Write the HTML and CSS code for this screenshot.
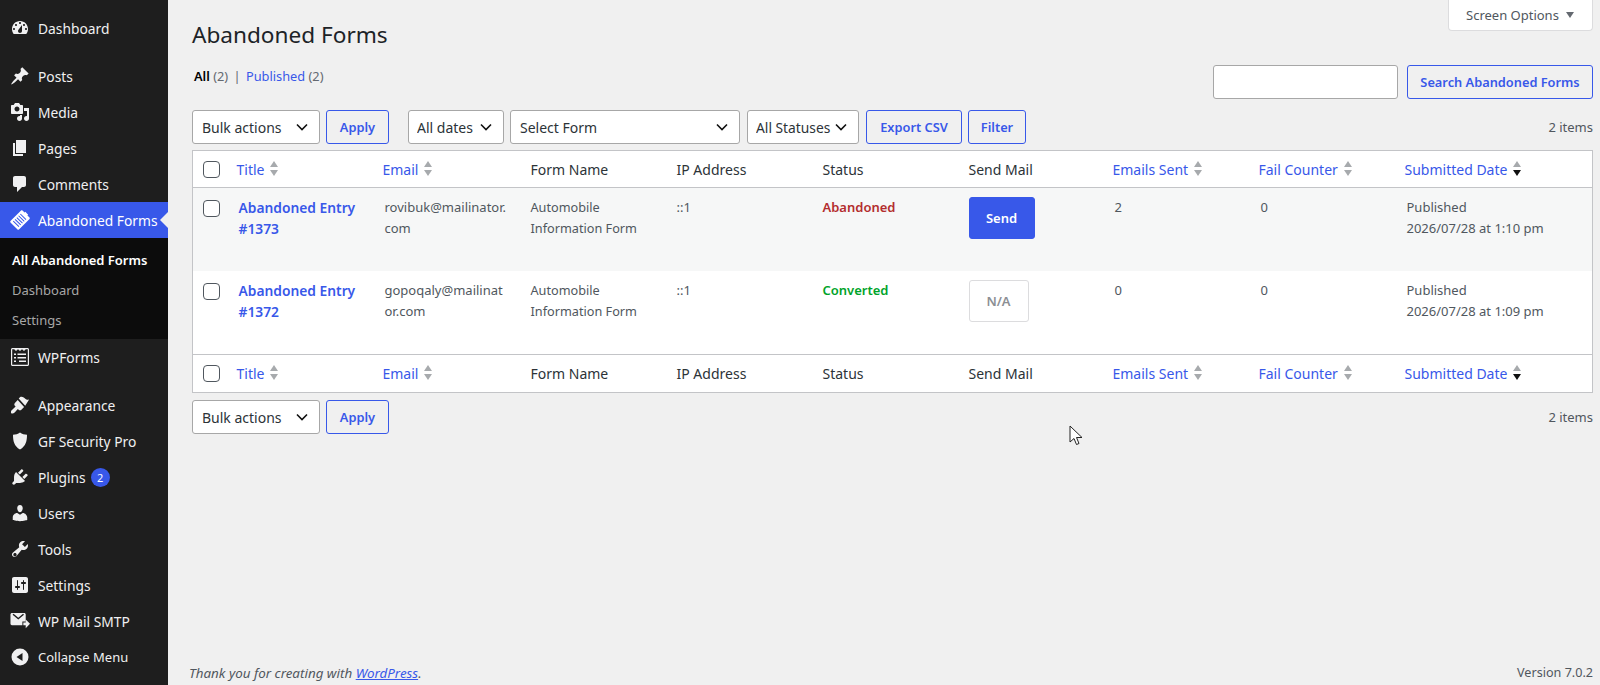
FILE: index.html
```html
<!DOCTYPE html>
<html lang="en">
<head>
    <meta charset="UTF-8">
    <title>Abandoned Forms</title>
    <link rel="stylesheet" href="styles.css">
</head>
<body>
    <div class="admin-menu">
        <ul class="menu">
            <li class="menu-item"><svg viewBox="0 0 20 20"><path d="M3.76 16h12.48c1.1-1.37 1.76-3.11 1.76-5 0-4.42-3.58-8-8-8s-8 3.58-8 8c0 1.89.66 3.63 1.76 5zM10 4c.55 0 1 .45 1 1s-.45 1-1 1-1-.45-1-1 .45-1 1-1zM6 6c.55 0 1 .45 1 1s-.45 1-1 1-1-.45-1-1 .45-1 1-1zm8 0c.55 0 1 .45 1 1s-.45 1-1 1-1-.45-1-1 .45-1 1-1zm-5.37 5.55L12 7v6c0 1.1-.9 2-2 2s-2-.9-2-2c0-.57.24-1.08.63-1.45zM4 10c.55 0 1 .45 1 1s-.45 1-1 1-1-.45-1-1 .45-1 1-1zm12 0c.55 0 1 .45 1 1s-.45 1-1 1-1-.45-1-1 .45-1 1-1z" fill-rule="evenodd"/></svg>Dashboard</li>
        </ul>
        <ul class="menu">
            <li class="menu-item"><svg viewBox="0 0 20 20"><path d="M10.44 3.02l1.82-1.82 6.36 6.35-1.83 1.82c-1.05-.68-2.48-.57-3.41.36l-.75.75c-.92.93-1.04 2.35-.35 3.41l-1.83 1.82-2.41-2.41-2.8 2.79c-.42.42-3.38 2.71-3.8 2.29s1.86-3.39 2.28-3.81l2.79-2.79L4.1 9.36l1.83-1.82c1.05.69 2.48.57 3.4-.36l.75-.75c.93-.92 1.05-2.35.36-3.41z"/></svg>Posts</li>
            <li class="menu-item"><svg viewBox="0 0 20 20"><path d="M13 11V4c0-.55-.45-1-1-1h-1.67L9 1H5L3.67 3H2c-.55 0-1 .45-1 1v7c0 .55.45 1 1 1h10c.55 0 1-.45 1-1zM7 4.5c1.38 0 2.5 1.12 2.5 2.5S8.38 9.5 7 9.5 4.500 8.38 4.500 7 5.620 4.500 7 4.500zM14 6h5v10.500c0 1.38-1.120 2.500-2.500 2.500S14 17.880 14 16.500s1.120-2.500 2.500-2.500c.17 0 .34.02.5.05V9h-3V6zm-4 8.050V13h2v3.500c0 1.38-1.120 2.500-2.500 2.500S7 17.880 7 16.500 8.120 14 9.500 14c.17 0 .34.02.5.05z" fill-rule="evenodd"/></svg>Media</li>
            <li class="menu-item"><svg viewBox="0 0 20 20"><path d="M6 15V2h10v13H6zm-1 1h8v2H3V5h2v11z"/></svg>Pages</li>
            <li class="menu-item"><svg viewBox="0 0 20 20"><path d="M5 2h9c1.100 0 2 .9 2 2v7c0 1.100-.9 2-2 2h-2l-5 5v-5H5c-1.100 0-2-.9-2-2V4c0-1.100.9-2 2-2z"/></svg>Comments</li>
            <li class="menu-item current"><svg viewBox="0 0 20 20"><path transform="rotate(45 10 10)" d="M5 1.500h3V.5h4v1h3c.5 0 1 .5 1 1v15c0 .5-.5 1-1 1H5c-.5 0-1-.5-1-1v-15c0-.5.5-1 1-1zM6 5v1h8V5H6zm0 2.500v1h8v-1H6zM6 10v1h8v-1H6zm0 2.500v1h8v-1H6zM6 15v1h8v-1H6z" fill-rule="evenodd"/></svg>Abandoned Forms</li>
        </ul>
        <ul class="submenu">
            <li class="sub-item active">All Abandoned Forms</li>
            <li class="sub-item">Dashboard</li>
            <li class="sub-item">Settings</li>
        </ul>
        <ul class="menu">
            <li class="menu-item"><svg viewBox="0 0 20 20"><path d="M2.500 1h15c.8 0 1.500.7 1.500 1.500v15c0 .8-.7 1.500-1.500 1.500h-15c-.8 0-1.500-.7-1.500-1.500v-15C1 1.700 1.700 1 2.500 1zm0 1.200c-.2 0-.3.100-.3.300v15c0 .2.100.3.3.3h15c.2 0 .3-.1.300-.3v-15c0-.2-.1-.3-.3-.3h-1.700L14 4l-2-1.800L10 4 8 2.200 6 4 4.200 2.200H2.500zM4 6.500h2v1.500H4V6.500zm3.500 0H16V8H7.500V6.500zM4 10h2v1.500H4V10zm3.500 0H16v1.500H7.500V10zM4 13.500h2V15H4v-1.500zm5 0h7V15H9v-1.500z" fill-rule="evenodd"/></svg>WPForms</li>
        </ul>
        <ul class="menu">
            <li class="menu-item"><svg viewBox="0 0 20 20"><path d="M8.700 3.600l1.500-1.500c.5-.5 2.300-.5 3.500.3 1.200.8 1.400 1.300 2.700 2 1.200.7 2.700.1 2.700.1l-3.900 6.200-6.500-7.100zM7.700 5l6.400 7-2.700 2.700c-.8.8-2 .8-2.800 0l-.7-.7c-.4.400-3.300 3.700-3.800 4.100-.9.800-2.800.5-3-.1-.4-1 .1-2.200.8-2.900.4-.4 3.300-3.200 3.700-3.600l-.7-.7c-.8-.8-.8-2 0-2.800L7.700 5z"/></svg>Appearance</li>
            <li class="menu-item"><svg viewBox="0 0 20 20"><path d="M10 1.500c2 1.500 4.500 2.200 7 2.200 0 6-1 11.300-7 14.800C4 15 3 9.700 3 3.700c2.500 0 5-.7 7-2.200z"/></svg>GF Security Pro</li>
            <li class="menu-item"><svg viewBox="0 0 20 20"><path d="M13.110 4.360L9.870 7.600 8 5.730l3.240-3.240c.35-.34 1.050-.2 1.560.32.52.51.66 1.210.31 1.550zm-8 1.770l.91-1.120 9.010 9.010-1.190.84c-.71.71-2.630 1.160-3.820 1.160H6.140L4.900 17.260c-.59.59-1.540.59-2.120 0-.59-.58-.59-1.530 0-2.120l1.240-1.240v-3.880c0-1.130.4-3.190 1.090-3.890zm7.260 3.970l3.240-3.240c.34-.35 1.040-.21 1.550.31.52.51.66 1.210.31 1.550l-3.240 3.250z"/></svg>Plugins<span class="count-badge">2</span></li>
            <li class="menu-item"><svg viewBox="0 0 20 20"><path d="M10 9.250c-2.270 0-2.730-3.440-2.730-3.440C7 4.020 7.820 2 9.970 2c2.160 0 2.980 2.020 2.710 3.810 0 0-.41 3.440-2.680 3.440zm0 2.570L12.720 10c2.390 0 4.520 2.330 4.520 4.530v2.490s-3.650 1.130-7.240 1.130c-3.650 0-7.240-1.130-7.240-1.130v-2.490c0-2.250 1.940-4.480 4.470-4.480z"/></svg>Users</li>
            <li class="menu-item"><svg viewBox="0 0 20 20"><path d="M16.680 9.770c-1.340 1.340-3.300 1.670-4.950.99l-5.410 6.520c-.99.99-2.590.99-3.580 0s-.99-2.590 0-3.570l6.520-5.420c-.68-1.650-.35-3.610.99-4.950 1.280-1.280 3.120-1.620 4.720-1.060l-2.890 2.890 2.820 2.820 2.860-2.870c.53 1.580.18 3.410-1.080 4.670zM3.810 16.910c.65.65 1.700.65 2.350 0 .65-.65.65-1.700 0-2.350-.65-.65-1.700-.65-2.350 0-.65.65-.65 1.700 0 2.350z" fill-rule="evenodd"/></svg>Tools</li>
            <li class="menu-item"><svg viewBox="0 0 20 20"><path d="M18 16V4c0-1.100-.9-2-2-2H4c-1.100 0-2 .9-2 2v12c0 1.100.9 2 2 2h12c1.100 0 2-.9 2-2zM8 11h1c.55 0 1 .45 1 1s-.45 1-1 1H8v1.500c0 .28-.22.5-.5.5s-.5-.22-.5-.5V13H6c-.55 0-1-.45-1-1s.45-1 1-1h1V5.500c0-.28.22-.5.5-.5s.5.22.5.5V11zm5-2h-1c-.55 0-1-.45-1-1s.45-1 1-1h1V5.500c0-.28.22-.5.5-.5s.5.22.5.5V7h1c.55 0 1 .45 1 1s-.45 1-1 1h-1v5.500c0 .28-.22.5-.5.5s-.5-.22-.5-.5V9z" fill-rule="evenodd"/></svg>Settings</li>
            <li class="menu-item"><svg viewBox="0 0 21 21"><path d="M2 2h13c.8 0 1.500.7 1.500 1.500V11h-3.500v4H2c-.8 0-1.500-.7-1.500-1.500v-10C.5 2.700 1.200 2 2 2zm.7 2l6 5 6-5-1-1.100-5 4.100-5-4.100-1 1.100z" fill-rule="evenodd"/><path d="M14 12h2.500V9l4.500 4.500-4.500 4.500v-3H14v-3z"/></svg>WP Mail SMTP</li>
            <li class="menu-item collapse"><svg viewBox="0 0 20 20"><path d="M10 1.500a8.500 8.500 0 1 1 0 17 8.500 8.500 0 0 1 0-17zM12.500 6L6.500 10l6 4V6z" fill-rule="evenodd"/></svg>Collapse Menu</li>
        </ul>
    </div>

    <div class="content">
        <div class="screen-options">Screen Options <span class="tab-arrow"></span></div>
        <h1 class="page-title">Abandoned Forms</h1>

        <div class="top-row">
            <div class="subsubsub"><strong>All</strong> <span class="num">(2)</span> <span class="sep">|</span> <a href="#">Published</a> <span class="num">(2)</span></div>
            <div class="search-box">
                <input class="search-input" type="text">
                <button class="btn">Search Abandoned Forms</button>
            </div>
        </div>

        <div class="tablenav tablenav-top">
            <select class="sel sel-bulk"><option>Bulk actions</option></select>
            <button class="btn btn-apply">Apply</button>
            <select class="sel sel-dates"><option>All dates</option></select>
            <select class="sel sel-form"><option>Select Form</option></select>
            <select class="sel sel-status"><option>All Statuses</option></select>
            <button class="btn btn-export">Export CSV</button>
            <button class="btn btn-filter">Filter</button>
            <span class="items">2 items</span>
        </div>

        <table class="entries">
            <colgroup>
                <col class="col-cb">
                <col class="col-std"><col class="col-std"><col class="col-std"><col class="col-std">
                <col class="col-std"><col class="col-std"><col class="col-std"><col class="col-std">
                <col>
            </colgroup>
            <thead>
                <tr>
                    <th class="cb"><input type="checkbox"></th>
                    <th class="sortable"><a href="#">Title<span class="sort"></span></a></th>
                    <th class="sortable"><a href="#">Email<span class="sort"></span></a></th>
                    <th>Form Name</th>
                    <th>IP Address</th>
                    <th>Status</th>
                    <th>Send Mail</th>
                    <th class="sortable"><a href="#">Emails Sent<span class="sort"></span></a></th>
                    <th class="sortable"><a href="#">Fail Counter<span class="sort"></span></a></th>
                    <th class="sortable"><a href="#">Submitted Date<span class="sort desc"></span></a></th>
                </tr>
            </thead>
            <tbody>
                <tr class="alt">
                    <td class="cb"><input type="checkbox"></td>
                    <td><a class="entry-link" href="#">Abandoned Entry #1373</a></td>
                    <td class="email">rovibuk@mailinator.com</td>
                    <td class="form-name">Automobile Information Form</td>
                    <td>::1</td>
                    <td><span class="status abandoned">Abandoned</span></td>
                    <td><button class="send">Send</button></td>
                    <td>2</td>
                    <td>0</td>
                    <td>Published<br>2026/07/28 at 1:10 pm</td>
                </tr>
                <tr>
                    <td class="cb"><input type="checkbox"></td>
                    <td><a class="entry-link" href="#">Abandoned Entry #1372</a></td>
                    <td class="email">gopoqaly@mailinator.com</td>
                    <td class="form-name">Automobile Information Form</td>
                    <td>::1</td>
                    <td><span class="status converted">Converted</span></td>
                    <td><span class="na">N/A</span></td>
                    <td>0</td>
                    <td>0</td>
                    <td>Published<br>2026/07/28 at 1:09 pm</td>
                </tr>
            </tbody>
            <tfoot>
                <tr>
                    <th class="cb"><input type="checkbox"></th>
                    <th class="sortable"><a href="#">Title<span class="sort"></span></a></th>
                    <th class="sortable"><a href="#">Email<span class="sort"></span></a></th>
                    <th>Form Name</th>
                    <th>IP Address</th>
                    <th>Status</th>
                    <th>Send Mail</th>
                    <th class="sortable"><a href="#">Emails Sent<span class="sort"></span></a></th>
                    <th class="sortable"><a href="#">Fail Counter<span class="sort"></span></a></th>
                    <th class="sortable"><a href="#">Submitted Date<span class="sort desc"></span></a></th>
                </tr>
            </tfoot>
        </table>

        <div class="tablenav tablenav-bottom">
            <select class="sel sel-bulk"><option>Bulk actions</option></select>
            <button class="btn btn-apply">Apply</button>
            <span class="items">2 items</span>
        </div>

        <div class="footer">
            <em>Thank you for creating with <a href="#">WordPress</a>.</em>
            <span class="version">Version 7.0.2</span>
        </div>

        <svg class="mouse-cursor" viewBox="0 0 14 22"><path d="M1 1v16l4-3.500 2.500 6 2.500-1-2.500-6H13z" fill="#fff" stroke="#222" stroke-width="1"/></svg>
    </div>
</body>
</html>
```

FILE: styles.css
```css
* {
    box-sizing: border-box;
}
html, body {
    height: 685px;
    overflow: hidden;
}
body {
    margin: 0;
    display: flex;
    font-family: "Noto Sans", sans-serif;
    font-size: 13px;
    color: #3c434a;
    background-color: #f0f0f0;
}
a {
    color: #3858e9;
    text-decoration: none;
}

/* sidebar */
.admin-menu {
    width: 168px;
    flex-shrink: 0;
    padding-top: 10px;
    background-color: #1e1e1e;
    color: #f0f0f1;
}
.menu, .submenu {
    list-style: none;
    margin: 0 0 12px;
    padding: 0;
}
.menu-item {
    position: relative;
    display: flex;
    align-items: center;
    height: 36px;
    padding-left: 10px;
    font-size: 13.800px;
    white-space: nowrap;
}
.menu-item svg {
    width: 20px;
    height: 20px;
    margin-right: 8px;
    fill: #f0f0f1;
    flex-shrink: 0;
}
.menu-item.current {
    background-color: #3858e9;
    color: #fff;
}
.menu-item.current svg {
    fill: #fff;
}
.menu-item.current::after {
    content: "";
    position: absolute;
    right: 0;
    top: 10px;
    border: 8px solid transparent;
    border-right-color: #f0f0f0;
    border-left-width: 0;
}
.menu:has(.current) {
    margin-bottom: 0;
}
.submenu {
    margin: 0;
    padding: 7px 0 5px;
    background-color: #0c0c0c;
    height: 101px;
}
.sub-item {
    height: 30px;
    line-height: 30px;
    padding-left: 12px;
    font-size: 13px;
    color: #a7a7a7;
}
.sub-item.active {
    color: #fff;
    font-weight: 600;
}
.count-badge {
    width: 19px;
    height: 19px;
    margin-left: 5px;
    border-radius: 50%;
    background-color: #3858e9;
    color: #fff;
    font-size: 11px;
    line-height: 19px;
    text-align: center;
}
.collapse {
    font-size: 13px;
}

/* main area */
.content {
    position: relative;
    flex: 1;
    display: flex;
    flex-direction: column;
    min-width: 0;
    padding: 0 7px 0 24px;
}
.screen-options {
    position: absolute;
    top: 0;
    right: 7px;
    width: 145px;
    height: 31px;
    padding-left: 17px;
    line-height: 30px;
    background-color: #fff;
    border: 1px solid #dcdcde;
    border-top: 0;
    border-radius: 0 0 4px 4px;
    color: #50575e;
}
.tab-arrow {
    display: inline-block;
    margin-left: 4px;
    border: 4.500px solid transparent;
    border-top: 6px solid #646970;
    border-bottom: 0;
    vertical-align: 2px;
}
.page-title {
    margin: 19px 0 0;
    font-size: 22.600px;
    font-weight: 400;
    line-height: 32px;
    color: #1d2327;
}
.top-row {
    display: flex;
    justify-content: space-between;
    align-items: flex-start;
    margin-top: 14px;
}
.subsubsub {
    padding-top: 2px;
    padding-left: 2px;
    font-size: 12.800px;
    color: #646970;
}
.subsubsub strong {
    color: #000;
    font-weight: 600;
}
.sep {
    margin: 0 2px;
}
.search-box {
    display: flex;
    gap: 9px;
}
.search-input {
    width: 185px;
    height: 34px;
    background-color: #fff;
    border: 1px solid #a7a7a7;
    border-radius: 3px;
}

/* buttons and selects */
.btn {
    height: 34px;
    padding: 0;
    font: 600 12.800px "Noto Sans", sans-serif;
    color: #3858e9;
    background-color: #f0f0f0;
    border: 1px solid #3858e9;
    border-radius: 3px;
}
.search-box .btn {
    width: 186px;
}
.btn-apply {
    width: 63px;
    margin-left: 6px;
}
.btn-export {
    width: 96px;
    margin-left: 7px;
}
.btn-filter {
    width: 58px;
    margin-left: 6px;
}
.sel {
    height: 34px;
    padding: 0 0 0 9px;
    appearance: none;
    font: 400 14px "Noto Sans", sans-serif;
    color: #2c3338;
    background: #fff url("data:image/svg+xml,%3Csvg xmlns='http://www.w3.org/2000/svg' viewBox='0 0 12 8'%3E%3Cpath d='M1 1.500l5 5 5-5' fill='none' stroke='%23111' stroke-width='1.600'/%3E%3C/svg%3E") no-repeat right 11px center / 12px 8px;
    border: 1px solid #a7a7a7;
    border-radius: 3px;
}
.sel-bulk {
    width: 128px;
}
.sel-dates {
    width: 96px;
    margin-left: 19px;
    padding-left: 8px;
}
.sel-form {
    width: 230px;
    margin-left: 6px;
}
.sel-status {
    width: 112px;
    margin-left: 7px;
    padding-left: 8px;
    font-size: 13.800px;
}
.tablenav {
    display: flex;
    align-items: center;
}
.tablenav-top {
    margin-top: 11px;
}
.tablenav-bottom {
    margin-top: 7px;
}
.items {
    margin-left: auto;
    color: #50575e;
}

/* table */
.entries {
    width: 1401px;
    margin-top: 6px;
    table-layout: fixed;
    border-collapse: separate;
    border-spacing: 0;
    background-color: #fff;
    border: 1px solid #c3c4c7;
    font-size: 13px;
}
.col-cb {
    width: 35.500px;
}
.col-std {
    width: 146px;
}
.entries th {
    height: 37px;
    padding: 0 10px;
    text-align: left;
    font-size: 14px;
    font-weight: 400;
    color: #2c3338;
}
.entries thead th {
    border-bottom: 1px solid #c3c4c7;
}
.entries tfoot th {
    height: 38px;
    border-top: 1px solid #c3c4c7;
}
.entries th.sortable {
    padding: 0 8px;
}
.entries th.cb, .entries td.cb {
    padding: 0 0 0 10px;
}
.entries td {
    height: 83px;
    padding: 9px 10px;
    vertical-align: top;
    line-height: 21px;
    color: #50575e;
    overflow-wrap: break-word;
}
.entries td.cb {
    padding-top: 12px;
}
.alt td {
    background-color: #f6f7f7;
}
.entries input[type="checkbox"] {
    appearance: none;
    display: block;
    width: 17px;
    height: 17px;
    margin: 0;
    background-color: #fff;
    border: 1px solid #50575e;
    border-radius: 4px;
}
.sort {
    display: inline-block;
    position: relative;
    width: 9px;
    height: 15px;
    margin-left: 6px;
    vertical-align: -1px;
}
.sort::before, .sort::after {
    content: "";
    position: absolute;
    left: 0;
    border-left: 4.500px solid transparent;
    border-right: 4.500px solid transparent;
}
.sort::before {
    top: 0;
    border-bottom: 6px solid #a7aaad;
}
.sort::after {
    bottom: 0;
    border-top: 6px solid #a7aaad;
}
.sort.desc::after {
    border-top-color: #111;
}
.entry-link {
    display: block;
    font-size: 13.800px;
    font-weight: 600;
}
.email {
    word-break: break-all;
}
.form-name {
    font-size: 12.700px;
}
.status {
    font-weight: 600;
}
.abandoned {
    color: #b32d2e;
}
.converted {
    color: #00a32a;
}
.send {
    display: block;
    width: 66px;
    height: 42px;
    padding: 0;
    font: 600 13px "Noto Sans", sans-serif;
    color: #fff;
    background-color: #3858e9;
    border: 1px solid #3858e9;
    border-radius: 3px;
}
.na {
    display: block;
    width: 60px;
    height: 42px;
    line-height: 40px;
    text-align: center;
    font-weight: 600;
    color: #8c8f94;
    background-color: #fff;
    border: 1px solid #dcdcde;
    border-radius: 3px;
}

/* footer */
.footer {
    display: flex;
    justify-content: space-between;
    margin-top: auto;
    margin-left: -3px;
    padding-bottom: 2px;
    line-height: 20px;
    font-size: 13.400px;
    color: #50575e;
}
.footer a {
    text-decoration: underline;
}
.version {
    font-size: 12.600px;
}
.mouse-cursor {
    position: absolute;
    left: 901px;
    top: 425px;
    width: 14px;
    height: 22px;
}
```
